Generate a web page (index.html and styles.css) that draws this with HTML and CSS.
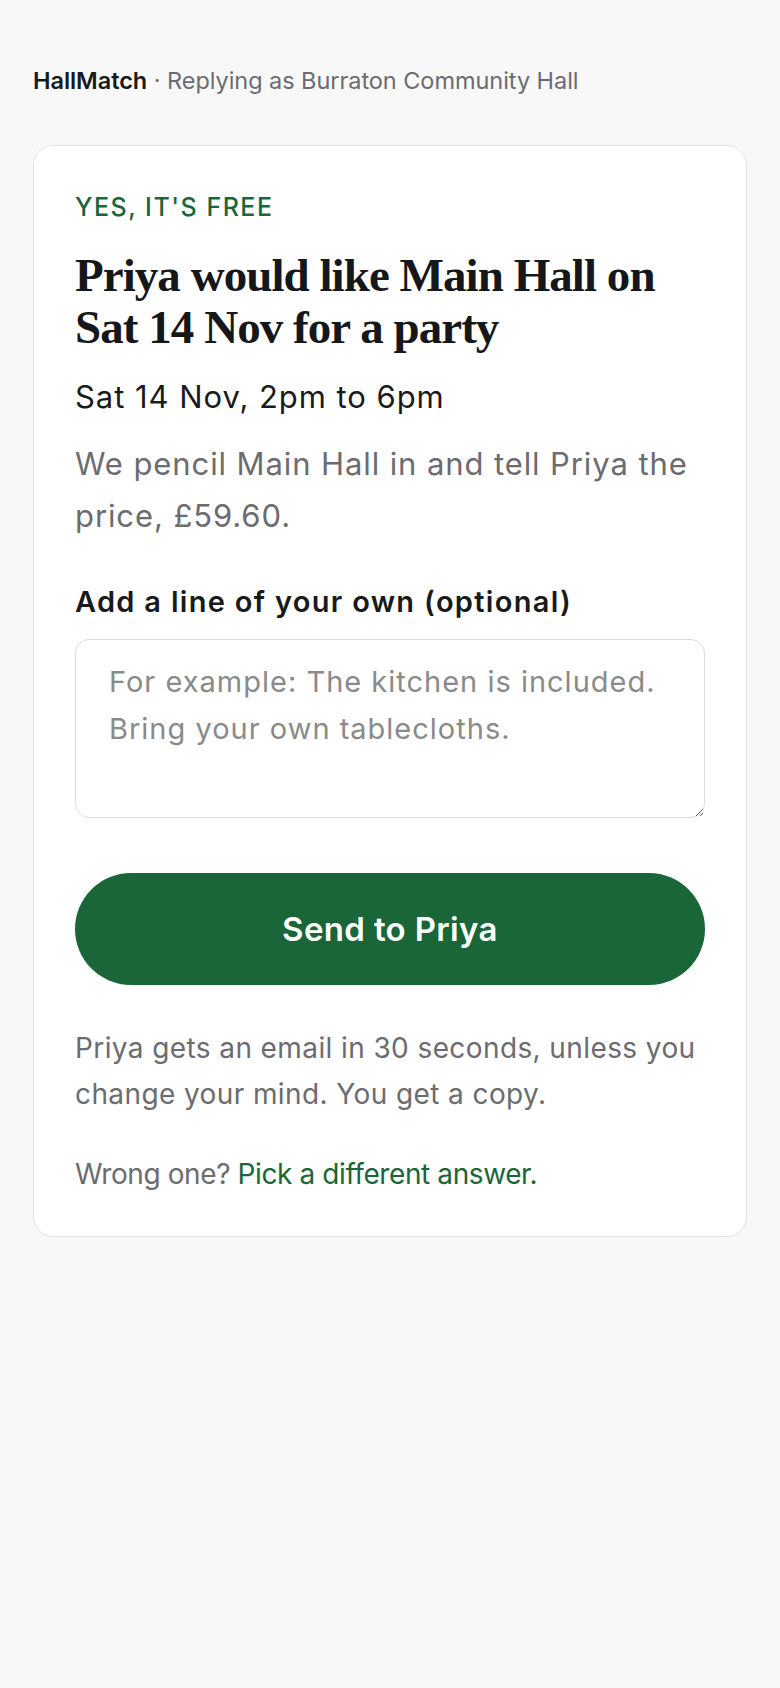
FILE: index.html
```html
<!DOCTYPE html>
<html lang="en">
<head>
<meta charset="utf-8">
<title>HallMatch</title>
<link rel="stylesheet" href="styles.css">
</head>
<body>
<div class="page">
  <header class="topbar"><span class="brand">HallMatch</span> · Replying as Burraton Community Hall</header>
  <main class="card">
    <p class="eyebrow">YES, IT'S FREE</p>
    <h1 class="title">Priya would like Main Hall on Sat 14 Nov for a party</h1>
    <p class="when">Sat 14 Nov, 2pm to 6pm</p>
    <p class="desc">We pencil Main Hall in and tell Priya the price, £59.60.</p>
    <label class="field-label" for="note">Add a line of your own (optional)</label>
    <textarea id="note" class="note" placeholder="For example: The kitchen is included. Bring your own tablecloths."></textarea>
    <button class="send" type="button">Send to Priya</button>
    <p class="fine">Priya gets an email in 30 seconds, unless you change your mind. You get a copy.</p>
    <p class="fine wrong">Wrong one? <a class="link" href="#">Pick a different answer.</a></p>
  </main>
</div>
</body>
</html>
```
FILE: styles.css
```css
* { box-sizing: border-box; }
html, body { margin: 0; padding: 0; }
body {
  background: #f8f8f8;
  font-family: Inter, "Noto Sans", sans-serif;
  color: #1a1a1a;
  min-height: 1688px;
}
.page {
  padding: 66px 33px 40px;
}
.topbar {
  font-size: 23.5px;
  line-height: 30px;
  color: #6b6b70;
  letter-spacing: -0.05px;
}
.brand {
  color: #1a1a1a;
  font-weight: 600;
}
.card {
  margin-top: 49px;
  background: #fff;
  border: 1px solid #e2e2e2;
  border-radius: 20px;
  padding: 45px 41px 39px;
  display: flex;
  flex-direction: column;
}
.eyebrow {
  margin: 0;
  font-size: 25px;
  line-height: 32px;
  font-weight: 500;
  letter-spacing: 1.5px;
  color: #1a6638;
}
.title {
  margin: 26px 0 0;
  font-family: "Liberation Serif", "Times New Roman", serif;
  font-weight: 700;
  font-size: 47px;
  line-height: 52px;
  letter-spacing: -0.95px;
  color: #15171a;
}
.when {
  margin: 24px 0 0;
  font-size: 31px;
  line-height: 40px;
  color: #1a1a1a;
  letter-spacing: 0.95px;
}
.desc {
  margin: 21px 0 0;
  font-size: 31px;
  line-height: 52px;
  color: #6b6b70;
  letter-spacing: 0.9px;
}
.field-label {
  margin-top: 41px;
  font-size: 29px;
  line-height: 38px;
  font-weight: 600;
  color: #1a1a1a;
  letter-spacing: 1.3px;
}
.note {
  margin-top: 18px;
  width: 100%;
  height: 179px;
  border: 1px solid #dcdcdc;
  border-radius: 14px;
  padding: 18px 33px;
  font-family: Inter, "Noto Sans", sans-serif;
  font-size: 29px;
  line-height: 47px;
  letter-spacing: 1px;
  color: #1a1a1a;
  background: #fff;
  resize: vertical;
  outline: none;
}
.note::placeholder {
  color: #8a8a8a;
}
.send {
  margin-top: 55px;
  width: 100%;
  height: 112px;
  border: 0;
  border-radius: 56px;
  background: #1a6638;
  color: #fff;
  font-family: Inter, "Noto Sans", sans-serif;
  font-size: 33px;
  font-weight: 600;
  letter-spacing: 0.35px;
  cursor: pointer;
}
.fine {
  margin: 40px 0 0;
  font-size: 28px;
  line-height: 46px;
  color: #6b6b70;
  letter-spacing: 0.4px;
}
.fine.wrong {
  margin-top: 34px;
  letter-spacing: -0.4px;
}
.link {
  color: #1a6638;
  text-decoration: none;
}
```
